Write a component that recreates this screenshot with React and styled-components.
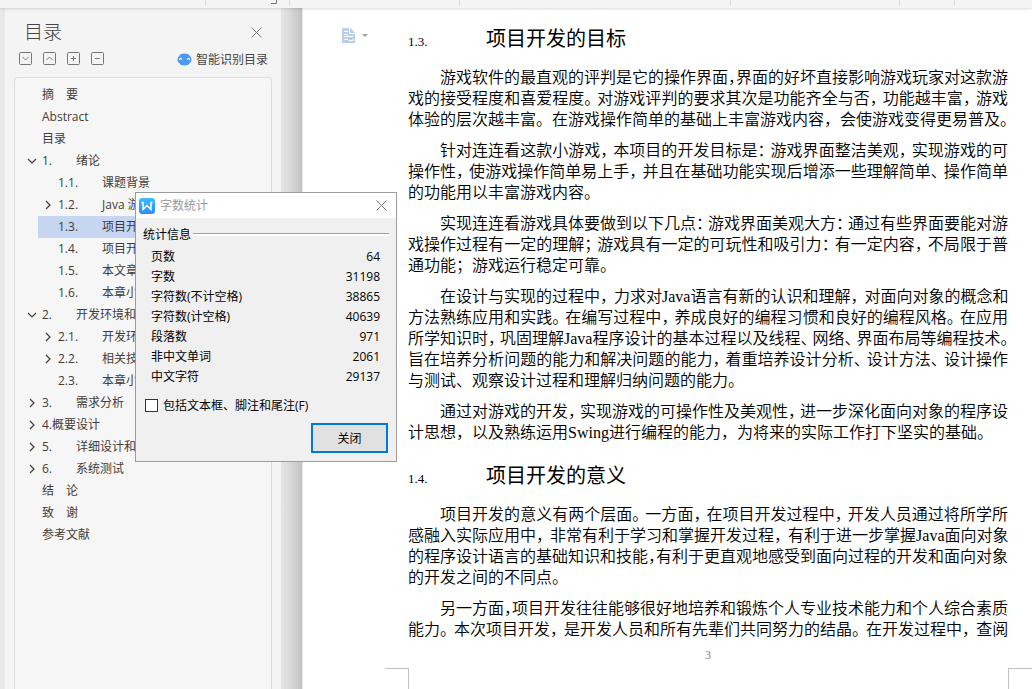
import React from 'react';
import styled, { createGlobalStyle } from 'styled-components';

const GlobalStyle = createGlobalStyle`
    * {
        box-sizing: border-box;
    }
    body {
        margin: 0;
        background: #ffffff;
        overflow: hidden;
    }
    body, button, input {
        font-family: 'Open Sans', 'Noto Sans CJK SC', sans-serif;
        font-size: 12px;
    }
`;

const Wrapper = styled.div`
    position: relative;
    display: flex;
    flex-direction: column;
    height: 100vh;
    overflow: hidden;
`;

const Ribbon = styled.header`
    display: flex;
    flex: none;
    height: 8px;
    padding-bottom: 2px;
    background: #f4f4f4;
    box-shadow: 0 1px 3px rgba(0, 0, 0, 0.15);
    z-index: 1;
`;

const RibbonGroup = styled.div`
    display: flex;
    justify-content: flex-end;
    flex: none;
    width: ${({ $width }) => $width}px;
    padding-right: 12px;
    border-right: 1px solid #dcdcdc;
`;

const Main = styled.div`
    display: flex;
    flex: 1;
    min-height: 0;
`;

const Sidebar = styled.aside`
    display: flex;
    flex-direction: column;
    flex: none;
    width: 281px;
    padding: 8px 9px 0;
    border-left: 5px solid #e8e8e8;
    background: #f4f4f4;
    color: #444444;
`;

const SidebarHeader = styled.div`
    display: flex;
    align-items: center;
    justify-content: space-between;
    height: 32px;
    padding: 0 10px;
`;

const SidebarTitle = styled.h2`
    margin: 0;
    font-size: 19px;
    font-weight: 300;
    line-height: 32px;
`;

const IconButton = styled.button`
    display: flex;
    padding: 0;
    border: 0;
    background: none;
    color: #777777;
`;

const SidebarTools = styled.div`
    display: flex;
    align-items: center;
    gap: 11px;
    height: 21px;
    padding: 0 4px 0 5px;
`;

const SmartButton = styled(IconButton)`
    align-items: center;
    gap: 4px;
    margin-left: auto;
    padding-top: 2px;
    color: #444444;
    line-height: 22px;
`;

const Outline = styled.nav`
    flex: 1;
    width: 258px;
    margin-top: 8px;
    padding-top: 6px;
    border: 1px solid #dedede;
    border-bottom: 0;
    border-radius: 4px 4px 0 0;
    background: #f6f6f6;
`;

const OutlineItem = styled.a`
    display: flex;
    align-items: center;
    height: 22px;
    margin-left: ${({ $level }) => ($level === 2 ? 23 : 7)}px;
    padding-left: 5px;
    background: ${({ $active }) => ($active ? '#c6d6f1' : 'none')};
    color: #443c38;
    line-height: 22px;
    text-decoration: none;
    white-space: nowrap;
`;

const ArrowSlot = styled.span`
    display: flex;
    flex: none;
    width: 15px;
`;

const ItemNumber = styled.span`
    flex: none;
    width: ${({ $level }) => ($level === 2 ? 44 : 34)}px;
`;

const Gutter = styled.div`
    flex: none;
    width: 22px;
    border-right: 1px solid #e8e8e8;
    background: linear-gradient(to right, #e6e6e6, #dadada 40%, #c2c2c2);
`;

const Page = styled.article`
    display: flex;
    flex-direction: column;
    flex: 1;
    min-width: 0;
    background: #ffffff;
    color: #000000;
`;

const PageBody = styled.div`
    position: relative;
    padding: 16px 24px 0 105px;
`;

const ParagraphMenu = styled(IconButton)`
    position: absolute;
    top: 20px;
    left: 39px;
    align-items: center;
    gap: 6px;
`;

const Heading = styled.h3`
    display: flex;
    align-items: baseline;
    margin: 0 0 10px;
    font-size: 20px;
    font-weight: 400;
    line-height: 30px;

    p + & {
        margin-top: 18px;
    }
`;

const HeadingNumber = styled.span`
    flex: none;
    width: 78px;
    font-family: 'Liberation Serif', serif;
    font-size: 13px;
`;

const Paragraph = styled.p`
    margin: 0;
    font-family: 'Liberation Serif', 'Noto Sans CJK SC', serif;
    font-size: 16px;
    font-weight: 350;
    line-height: 21px;

    & + & {
        margin-top: 10px;
    }
`;

const Line = styled.span`
    display: block;
    text-align-last: ${({ $full }) => ($full ? 'justify' : 'left')};
    white-space: nowrap;

    &:first-child {
        padding-left: 32px;
    }
`;

const TightMark = styled.span`
    padding-right: ${({ $gap }) => $gap}px;
    font-feature-settings: 'halt';
`;

const PageFooter = styled.footer`
    margin-top: 5px;
    padding: 0 24px 0 105px;
    color: #7f7f7f;
    font-family: 'Liberation Serif', serif;
    font-size: 12px;
    line-height: 20px;
    text-align: center;
`;

const CropMarks = styled.div`
    display: flex;
    flex: none;
    justify-content: space-between;
    height: 24px;
    margin: 3px 0 0 82px;
`;

const CropMark = styled.div`
    width: 24px;
    border-top: 1px solid #c0c0c0;
    border-right: ${({ $side }) => ($side === 'left' ? '1px solid #c0c0c0' : '0')};
    border-left: ${({ $side }) => ($side === 'right' ? '1px solid #c0c0c0' : '0')};
`;

const Dialog = styled.section`
    position: absolute;
    top: 192px;
    left: 135px;
    z-index: 2;
    width: 262px;
    border: 1px solid #9c9c9c;
    background: #f0f0f0;
    color: #000000;
`;

const DialogHeader = styled.header`
    display: flex;
    align-items: center;
    gap: 5px;
    height: 25px;
    padding: 0 9px 0 3px;
    background: #ffffff;
    color: #999999;
`;

const DialogTitle = styled.h4`
    flex: 1;
    margin: 0;
    font-size: 12px;
    font-weight: 400;
    line-height: 24px;
`;

const Legend = styled.div`
    display: flex;
    align-items: center;
    gap: 2px;
    height: 20px;
    margin-top: 6px;
    padding: 0 7px;

    &::after {
        content: '';
        flex: 1;
        height: 2px;
        border-top: 1px solid #a0a0a0;
        background: #ffffff;
    }
`;

const Stats = styled.table`
    width: 100%;
    margin: 3px 0 8px;
    border-collapse: collapse;
    line-height: 20px;

    th {
        padding: 0 0 0 15px;
        font-weight: 400;
        text-align: left;
    }
    td {
        padding: 0 16px 0 0;
        text-align: right;
    }
`;

const CheckLabel = styled.label`
    display: flex;
    align-items: center;
    gap: 5px;
    height: 20px;
    padding-left: 9px;
`;

const Checkbox = styled.input`
    appearance: none;
    width: 13px;
    height: 13px;
    margin: 0;
    border: 1px solid #333333;
    background: #ffffff;
`;

const DialogFooter = styled.div`
    display: flex;
    justify-content: flex-end;
    padding: 8px;
`;

const CloseButton = styled.button`
    width: 77px;
    height: 30px;
    padding: 0;
    border: 2px solid #0078d7;
    background: #e1e1e1;
    color: #000000;
`;

const ribbonGroups = [206, 84, 170, 271, 169, 55];

const outline = [
    { level: 1, title: '摘　要' },
    { level: 1, title: 'Abstract' },
    { level: 1, title: '目录' },
    { level: 1, number: '1.', title: '绪论', arrow: 'down' },
    { level: 2, number: '1.1.', title: '课题背景' },
    { level: 2, number: '1.2.', title: 'Java 游', arrow: 'right' },
    { level: 2, number: '1.3.', title: '项目开', active: true },
    { level: 2, number: '1.4.', title: '项目开' },
    { level: 2, number: '1.5.', title: '本文章' },
    { level: 2, number: '1.6.', title: '本章小' },
    { level: 1, number: '2.', title: '开发环境和', arrow: 'down' },
    { level: 2, number: '2.1.', title: '开发环', arrow: 'right' },
    { level: 2, number: '2.2.', title: '相关技', arrow: 'right' },
    { level: 2, number: '2.3.', title: '本章小' },
    { level: 1, number: '3.', title: '需求分析', arrow: 'right' },
    { level: 1, title: '4.概要设计', arrow: 'right' },
    { level: 1, number: '5.', title: '详细设计和', arrow: 'right' },
    { level: 1, number: '6.', title: '系统测试', arrow: 'right' },
    { level: 1, title: '结　论' },
    { level: 1, title: '致　谢' },
    { level: 1, title: '参考文献' },
];

const stats = [
    ['页数', 64],
    ['字数', 31198],
    ['字符数(不计空格)', 38865],
    ['字符数(计空格)', 40639],
    ['段落数', 971],
    ['非中文单词', 2061],
    ['中文字符', 29137],
];

const sections = [
    {
        number: '1.3.',
        title: '项目开发的目标',
        paragraphs: [
            [
                '游戏软件的最直观的评判是它的操作界面，界面的好坏直接影响游戏玩家对这款游',
                '戏的接受程度和喜爱程度。对游戏评判的要求其次是功能齐全与否，功能越丰富，游戏',
                '体验的层次越丰富。在游戏操作简单的基础上丰富游戏内容，会使游戏变得更易普及。',
            ],
            [
                '针对连连看这款小游戏，本项目的开发目标是：游戏界面整洁美观，实现游戏的可',
                '操作性，使游戏操作简单易上手，并且在基础功能实现后增添一些理解简单、操作简单',
                '的功能用以丰富游戏内容。',
            ],
            [
                '实现连连看游戏具体要做到以下几点：游戏界面美观大方：通过有些界面要能对游',
                '戏操作过程有一定的理解；游戏具有一定的可玩性和吸引力：有一定内容，不局限于普',
                '通功能；游戏运行稳定可靠。',
            ],
            [
                '在设计与实现的过程中，力求对Java语言有新的认识和理解，对面向对象的概念和',
                '方法熟练应用和实践。在编写过程中，养成良好的编程习惯和良好的编程风格。在应用',
                '所学知识时，巩固理解Java程序设计的基本过程以及线程、网络、界面布局等编程技术。',
                '旨在培养分析问题的能力和解决问题的能力，着重培养设计分析、设计方法、设计操作',
                '与测试、观察设计过程和理解归纳问题的能力。',
            ],
            [
                '通过对游戏的开发，实现游戏的可操作性及美观性，进一步深化面向对象的程序设',
                '计思想，以及熟练运用Swing进行编程的能力，为将来的实际工作打下坚实的基础。',
            ],
        ],
    },
    {
        number: '1.4.',
        title: '项目开发的意义',
        paragraphs: [
            [
                '项目开发的意义有两个层面。一方面，在项目开发过程中，开发人员通过将所学所',
                '感融入实际应用中，非常有利于学习和掌握开发过程，有利于进一步掌握Java面向对象',
                '的程序设计语言的基础知识和技能，有利于更直观地感受到面向过程的开发和面向对象',
                '的开发之间的不同点。',
            ],
            [
                '另一方面，项目开发往往能够很好地培养和锻炼个人专业技术能力和个人综合素质',
                '能力。本次项目开发，是开发人员和所有先辈们共同努力的结晶。在开发过程中，查阅',
            ],
        ],
    },
];

const EM = 16;
const MEASURE = 600;
const MARKS = /([，。、：；])/;

// how far a line runs past the measure before its punctuation is tightened
const overrun = (text, indent) => {
    const latin = text.replace(/[^A-Za-z]/g, '').length;
    return (text.length - latin) * EM + latin * 7 + indent - MEASURE;
};

const BOX_PATHS = {
    expandLevel: 'M3.5 5l3 3 3-3',
    collapseLevel: 'M3.5 8l3-3 3 3',
    expandAll: 'M4 6.5h5M6.5 4v5',
    collapseAll: 'M4 6.5h5',
};

const BoxIcon = ({ name }) => (
    <svg width="13" height="13" fill="none" stroke="currentColor">
        <rect x="0.5" y="0.5" width="12" height="12" rx="1" />
        <path d={BOX_PATHS[name]} />
    </svg>
);

const CloseIcon = ({ size }) => (
    <svg width={size} height={size} viewBox="0 0 10 10" fill="none" stroke="currentColor" strokeWidth="0.9">
        <path d="M0.5 0.5l9 9M9.5 0.5l-9 9" />
    </svg>
);

const Arrow = ({ direction }) => (
    <svg width="10" height="10" fill="none" stroke="#443c38" strokeWidth="1.2">
        <path d={direction === 'down' ? 'M1 3l4 4 4-4' : 'M3 1l4 4-4 4'} />
    </svg>
);

const SmartIcon = () => (
    <svg width="15" height="13" viewBox="0 0 15 13">
        <path d="M7.5 0.5C10 0.5 12 1.2 12.8 3C14 3.8 14.5 5 14.5 6.5C14.5 8 14 9.2 12.8 10C12 11.8 10 12.5 7.5 12.5S3 11.8 2.2 10C1 9.2 0.5 8 0.5 6.5S1 3.8 2.2 3C3 1.2 5 0.5 7.5 0.5z" fill="#4c9af5" />
        <path d="M2 6.500l1.500-1 1.500 1M10 6.500l1.500-1 1.500 1" fill="none" stroke="#ffffff" strokeWidth="1.1" />
    </svg>
);

const WpsLogo = () => (
    <svg width="16" height="16" viewBox="0 0 16 16">
        <defs>
            <linearGradient id="logo" x1="0" y1="0" x2="0" y2="1">
                <stop offset="0" stopColor="#3cbcff" />
                <stop offset="1" stopColor="#2b8cff" />
            </linearGradient>
        </defs>
        <rect width="16" height="16" rx="3" fill="url(#logo)" />
        <path d="M2.5 4.5H4V11.5L8 7.5L12 11.5V4.5H13.5" fill="none" stroke="#ffffff" strokeWidth="1.5" />
    </svg>
);

const DocumentIcon = () => (
    <svg width="14" height="15" viewBox="0 0 14 15">
        <path d="M0 0h8.500l4.500 5v10H0z" fill="#b9cdec" />
        <path d="M7.500 0v5.500h5.500M2 3.500h4M2 6.500h4M2 8.500h9M2 11.500h4M6.500 12.500h4.500v-2" fill="none" stroke="#ffffff" />
    </svg>
);

const TextLine = ({ text, indent }) => {
    const over = overrun(text, indent);
    if (over < -EM) {
        return <Line>{text}</Line>;
    }

    const parts = text.split(MARKS).filter(Boolean);
    const last = parts.length - 1;
    const endsWithMark = MARKS.test(parts[last]);
    const inner = parts.filter((part, i) => i < last && MARKS.test(part)).length;
    const rest = over - (endsWithMark ? EM / 2 : 0);
    const gap = Math.max(0, Math.floor(EM / 2 - rest / inner));

    return (
        <Line $full>
            {parts.map((part, i) => {
                if (!MARKS.test(part)) return part;
                if (i === last) return <TightMark key={i} $gap={0}>{part}</TightMark>;
                return rest > 0 ? <TightMark key={i} $gap={gap}>{part}</TightMark> : part;
            })}
        </Line>
    );
};

const OutlinePane = () => (
    <Sidebar>
        <SidebarHeader>
            <SidebarTitle>目录</SidebarTitle>
            <IconButton aria-label="关闭目录"><CloseIcon size={11} /></IconButton>
        </SidebarHeader>
        <SidebarTools>
            {Object.keys(BOX_PATHS).map(name => (
                <IconButton key={name} aria-label={name}><BoxIcon name={name} /></IconButton>
            ))}
            <SmartButton><SmartIcon />智能识别目录</SmartButton>
        </SidebarTools>
        <Outline>
            {outline.map(({ level, number, title, arrow, active }, i) => (
                <OutlineItem key={i} href="#" $level={level} $active={active}>
                    <ArrowSlot>{arrow && <Arrow direction={arrow} />}</ArrowSlot>
                    {number && <ItemNumber $level={level}>{number}</ItemNumber>}
                    {title}
                </OutlineItem>
            ))}
        </Outline>
    </Sidebar>
);

const WordCountDialog = () => (
    <Dialog role="dialog" aria-label="字数统计">
        <DialogHeader>
            <WpsLogo />
            <DialogTitle>字数统计</DialogTitle>
            <IconButton aria-label="关闭"><CloseIcon size={11} /></IconButton>
        </DialogHeader>
        <Legend>统计信息</Legend>
        <Stats>
            <tbody>
                {stats.map(([label, value]) => (
                    <tr key={label}>
                        <th scope="row">{label}</th>
                        <td>{value}</td>
                    </tr>
                ))}
            </tbody>
        </Stats>
        <CheckLabel>
            <Checkbox type="checkbox" />
            包括文本框、脚注和尾注(F)
        </CheckLabel>
        <DialogFooter>
            <CloseButton>关闭</CloseButton>
        </DialogFooter>
    </Dialog>
);

const App = () => (
    <>
        <GlobalStyle />
        <Wrapper>
            <Ribbon>
                {ribbonGroups.map((width, i) => (
                    <RibbonGroup key={i} $width={width}>
                        {i === 1 && (
                            <svg width="6" height="4" fill="none" stroke="#777777">
                                <path d="M5.500 0v3.500H0" />
                            </svg>
                        )}
                    </RibbonGroup>
                ))}
            </Ribbon>
            <Main>
                <OutlinePane />
                <Gutter />
                <Page>
                    <PageBody>
                        <ParagraphMenu aria-label="段落布局">
                            <DocumentIcon />
                            <svg width="6" height="4"><path d="M0 0h6L3 3z" fill="#a0a0a0" /></svg>
                        </ParagraphMenu>
                        {sections.map(({ number, title, paragraphs }) => (
                            <React.Fragment key={number}>
                                <Heading>
                                    <HeadingNumber>{number}</HeadingNumber>
                                    {title}
                                </Heading>
                                {paragraphs.map((lines, p) => (
                                    <Paragraph key={p}>
                                        {lines.map((text, i) => (
                                            <TextLine key={text} text={text} indent={i === 0 ? EM * 2 : 0} />
                                        ))}
                                    </Paragraph>
                                ))}
                            </React.Fragment>
                        ))}
                    </PageBody>
                    <PageFooter>3</PageFooter>
                    <CropMarks>
                        <CropMark $side="left" />
                        <CropMark $side="right" />
                    </CropMarks>
                </Page>
            </Main>
            <WordCountDialog />
        </Wrapper>
    </>
);

export default App;
